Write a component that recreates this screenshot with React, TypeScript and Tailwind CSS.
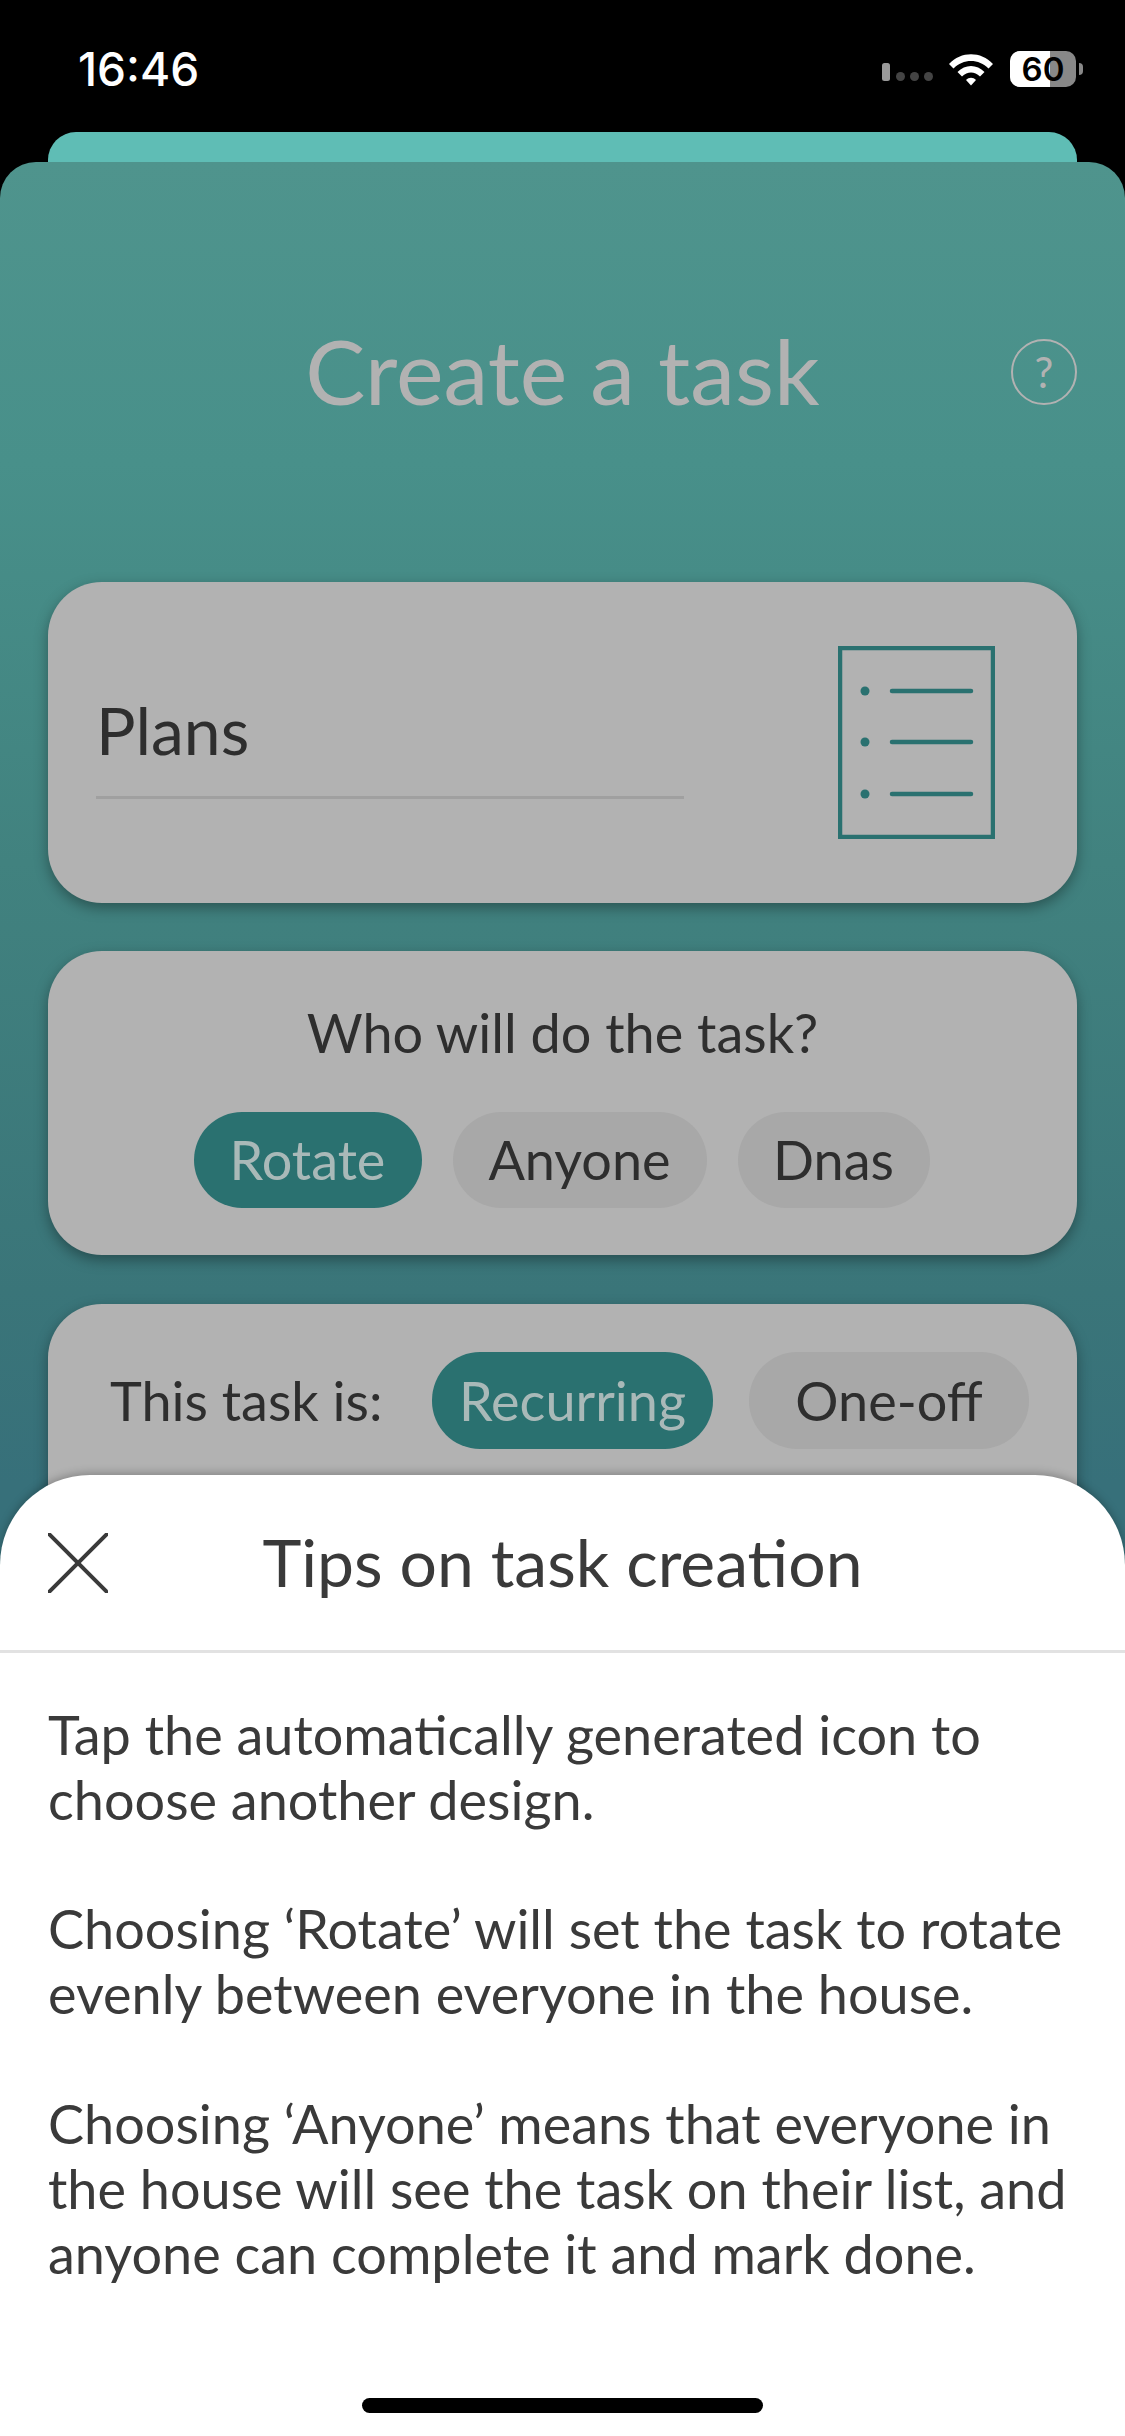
import React from "react";

const lato = "font-['Lato','Liberation_Sans',sans-serif]";

function Pill({ label, active, className }: { label: string; active?: boolean; className: string }) {
  return (
    <div
      className={`flex items-center justify-center rounded-[48px] text-[54px] leading-none ${className} ${
        active ? "bg-[#2a7170] text-[#a9b9b8]" : "bg-[#a8a8a8] text-[#2e2e2e]"
      }`}
    >
      {label}
    </div>
  );
}

function StatusBar() {
  return (
    <div className="relative flex h-[132px] items-start justify-between bg-black pl-[78px] pr-[42px] pt-[44px]">
      <span className="font-['Inter',sans-serif] text-[46px] font-medium leading-[50px] text-white">16:46</span>
      <div className="flex items-center pt-[7px]">
        <svg width="52" height="18" viewBox="0 0 52 18" className="mt-[6px]">
          <rect x="0" y="0" width="8" height="18" rx="2.5" fill="#9a9a9a" />
          <circle cx="18.5" cy="13.5" r="4.5" fill="#444" />
          <circle cx="32.5" cy="13.5" r="4.5" fill="#444" />
          <circle cx="46.5" cy="13.5" r="4.5" fill="#444" />
        </svg>
        <svg width="46" height="34" viewBox="0 0 46 34" className="ml-[14px]">
          <path d="M1 12 C13 -1 33 -1 45 12 L40.5 16.5 C31 6.5 15 6.5 5.5 16.5 Z" fill="#fff" />
          <path d="M9.5 20 C17 12 29 12 36.5 20 L32 24.5 C26.5 19 19.5 19 14 24.5 Z" fill="#fff" />
          <path d="M18 28 C21 25 25 25 28 28 L23 33.5 Z" fill="#fff" />
        </svg>
        <div className="relative ml-[16px] flex h-[36px] w-[66px] items-center justify-center rounded-[10px] bg-[#888888]">
          <div className="absolute inset-y-0 left-0 w-[40px] rounded-l-[10px] bg-white" />
          <span className="relative font-['Inter',sans-serif] text-[33px] font-semibold leading-[36px] text-black">60</span>
        </div>
        <div className="ml-[3px] h-[12px] w-[4px] rounded-r-[4px] bg-[#888888]" />
      </div>
    </div>
  );
}

function ListIcon() {
  return (
    <svg width="157" height="193" viewBox="0 0 157 193" fill="none" stroke="#2a7170">
      <rect x="2" y="2" width="153" height="189" strokeWidth="4.5" />
      {[45, 96, 148].map((y) => (
        <g key={y}>
          <circle cx="27" cy={y} r="4.5" fill="#2a7170" stroke="none" />
          <line x1="54" y1={y} x2="133" y2={y} strokeWidth="4.5" strokeLinecap="round" />
        </g>
      ))}
    </svg>
  );
}

export default function App() {
  return (
    <div className={`relative h-[2436px] w-[1125px] overflow-hidden bg-black ${lato}`}>
      <StatusBar />
      <div className="mx-[48px] h-[60px] rounded-t-[28px] bg-[#5fbdb5]" />
      <div className="relative -mt-[30px] h-[2274px] rounded-t-[36px] bg-[linear-gradient(180deg,#4f948d_0px,#48908a_300px,#41827f_700px,#3a7579_1130px,#37707a_1320px)] px-[48px]">
        <div className="relative flex h-[420px] items-start justify-center pt-[153px]">
          <h1 className="text-[90px] font-normal leading-[110px] text-[#b2b2b2]">Create a task</h1>
          <div className="absolute right-0 top-[177px] flex h-[66px] w-[66px] items-center justify-center rounded-full border-[2.5px] border-[#b2b2b2] text-[42px] leading-none text-[#b2b2b2]">
            ?
          </div>
        </div>

        <div className="flex h-[321px] items-center justify-between rounded-[54px] bg-[#b2b2b2] pl-[48px] pr-[82px] shadow-[0_5px_14px_rgba(0,0,0,0.35)]">
          <div className="mt-[4px] w-[588px] border-b-[3px] border-[#a0a0a0] pb-[26px] text-[66px] leading-[80px] text-[#2e2e2e]">
            Plans
          </div>
          <ListIcon />
        </div>

        <div className="mt-[48px] flex h-[304px] flex-col items-center rounded-[54px] bg-[#b2b2b2] pt-[49px] shadow-[0_5px_14px_rgba(0,0,0,0.35)]">
          <div className="text-[54px] leading-[66px] text-[#2e2e2e]">Who will do the task?</div>
          <div className="mt-[46px] -ml-[2px] flex gap-[31px]">
            <Pill label="Rotate" active className="h-[96px] w-[228px]" />
            <Pill label="Anyone" className="h-[96px] w-[254px]" />
            <Pill label="Dnas" className="h-[96px] w-[192px]" />
          </div>
        </div>

        <div className="mt-[49px] flex h-[304px] items-start rounded-[54px] bg-[#b2b2b2] pl-[62px] pt-[48px] shadow-[0_5px_14px_rgba(0,0,0,0.35)]">
          <div className="flex h-[97px] w-[322px] items-center text-[54px] leading-none text-[#2e2e2e]">This task is:</div>
          <Pill label="Recurring" active className="h-[97px] w-[281px]" />
          <Pill label="One-off" className="ml-[36px] h-[97px] w-[280px]" />
        </div>
      </div>

      <div className="absolute inset-x-0 bottom-0 h-[961px] rounded-t-[90px] bg-white shadow-[0_-2px_8px_rgba(0,0,0,0.25)]">
        <div className="relative flex h-[178px] items-center justify-center border-b-[3px] border-[#e2e2e2] pb-[2px]">
          <svg width="60" height="60" viewBox="0 0 60 60" className="absolute left-[48px] top-[58px]" stroke="#3a3a3a" strokeWidth="4" strokeLinecap="round">
            <line x1="1" y1="1" x2="59" y2="59" />
            <line x1="59" y1="1" x2="1" y2="59" />
          </svg>
          <h2 className="text-[66px] font-normal leading-none text-[#3a3a3a]">Tips on task creation</h2>
        </div>
        <div className="px-[48px] pt-[49px] text-[54px] leading-[65px] text-[#3a3a3a]">
          <p>Tap the automatically generated icon to<br />choose another design.</p>
          <p className="mt-[64px]">Choosing ‘Rotate’ will set the task to rotate<br />evenly between everyone in the house.</p>
          <p className="mt-[65px]">Choosing ‘Anyone’ means that everyone in<br />the house will see the task on their list, and<br />anyone can complete it and mark done.</p>
        </div>
        <div className="absolute bottom-[23px] left-[362px] h-[15px] w-[401px] rounded-full bg-black" />
      </div>
    </div>
  );
}
